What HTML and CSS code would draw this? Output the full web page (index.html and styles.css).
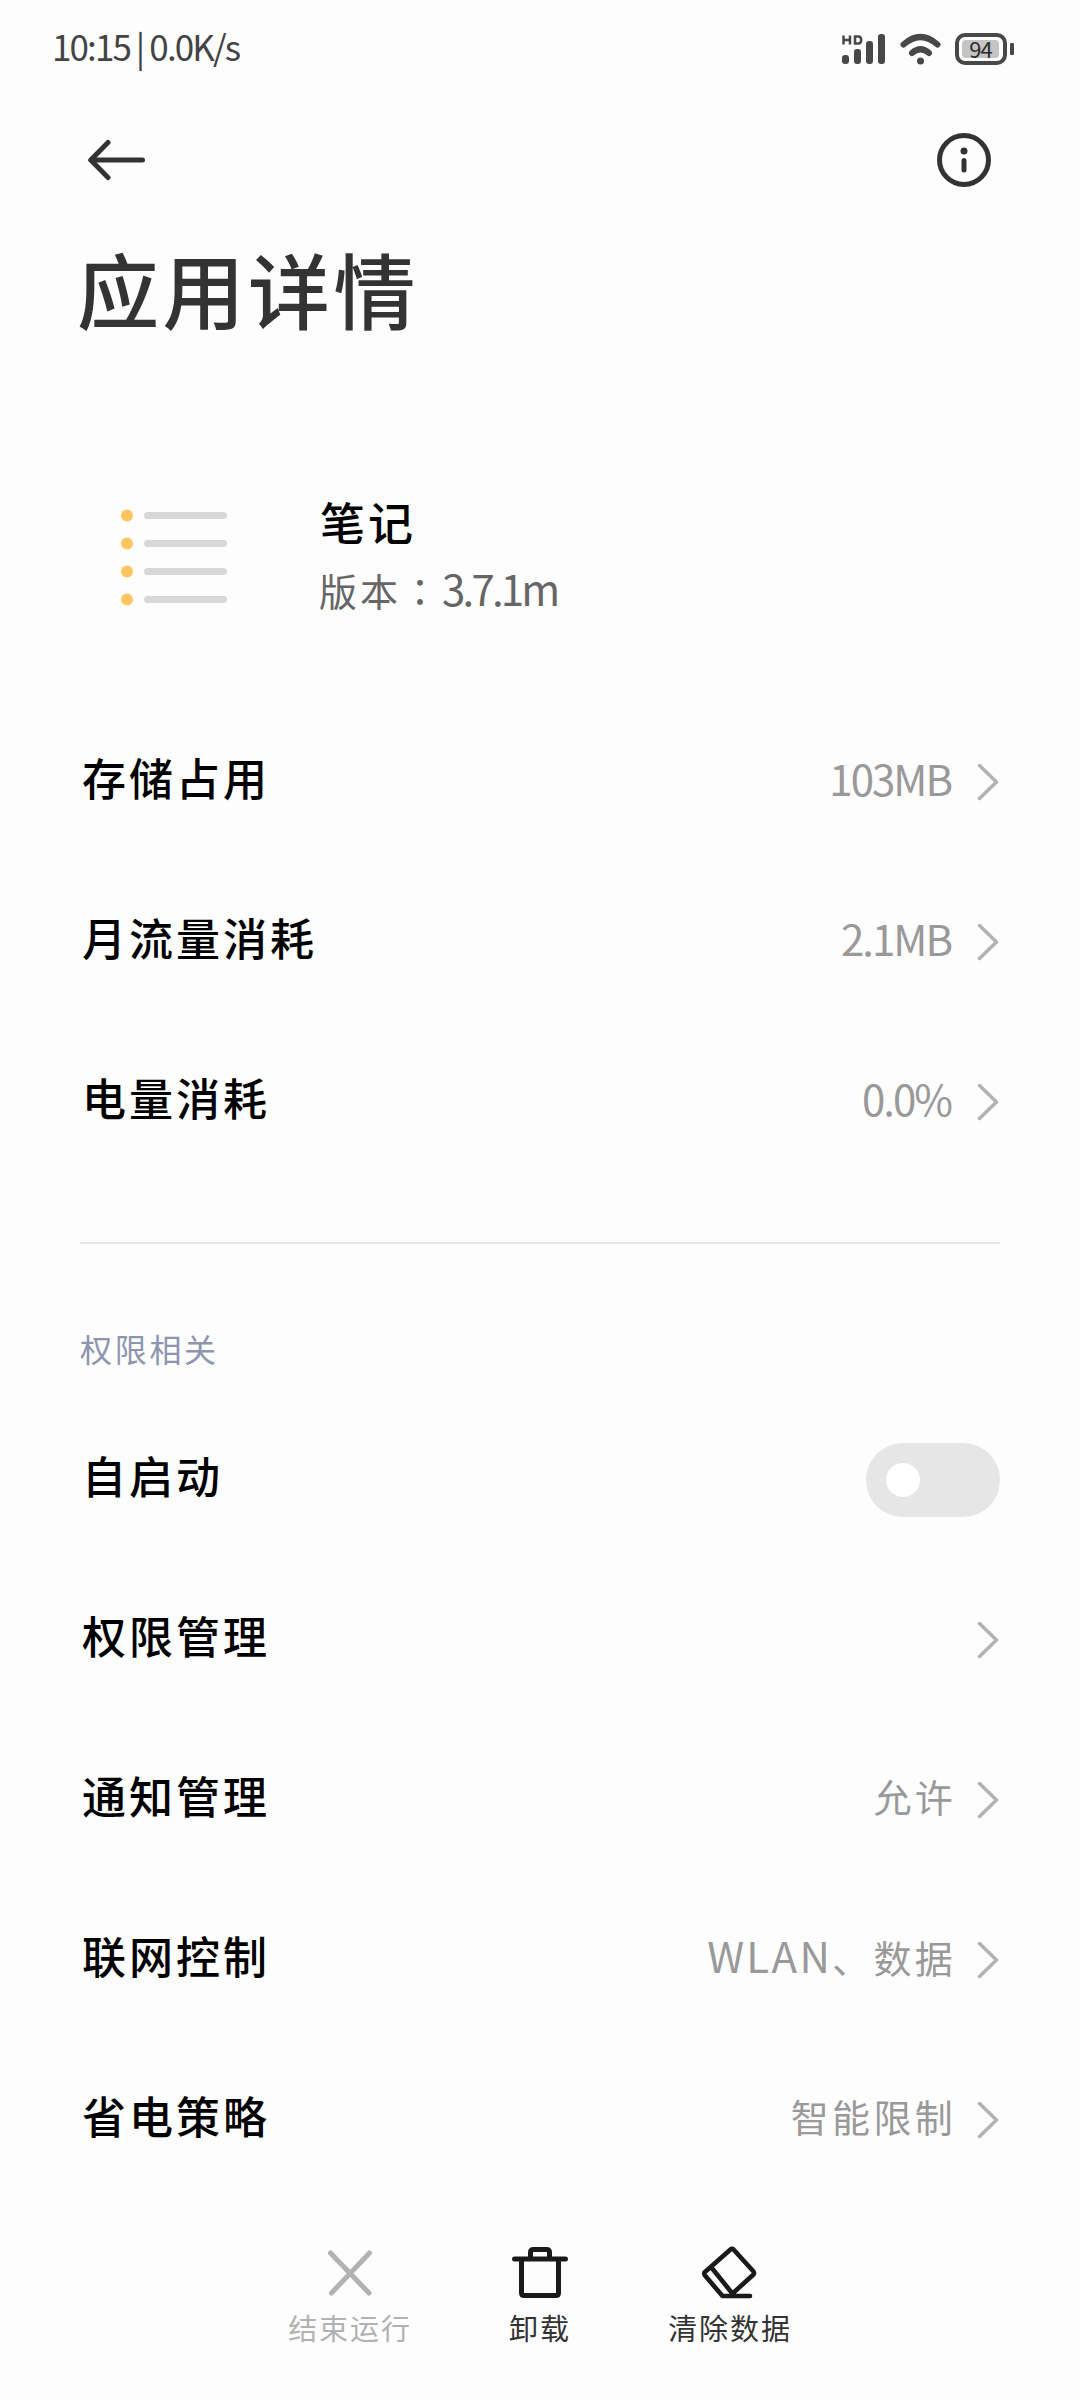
FILE: index.html
```html
<!DOCTYPE html>
<html lang="zh-CN">
<head>
<meta charset="utf-8">
<title>应用详情</title>
<link rel="stylesheet" href="styles.css">
</head>
<body>
<svg class="defs" width="0" height="0" aria-hidden="true">
  <symbol id="chevron" viewBox="0 0 24 40"><path d="M3.500 3.500L20.500 20L3.500 36.500" fill="none" stroke="#b2b2b2" stroke-width="3.500" stroke-linecap="round" stroke-linejoin="round"/></symbol>
</svg>
<div class="screen">
  <div class="status">
    <span class="status-text">10:15 | 0.0K/s</span>
    <div class="status-icons">
      <svg width="44" height="32" viewBox="0 0 44 32" fill="#484848">
        <path d="M1.500 2.500v9M8 2.500v9M1.500 7H8M13 3.500v7h3.200q3 0 3-3.500t-3-3.500z" fill="none" stroke="#484848" stroke-width="2.500"/>
        <rect x="0" y="22" width="7" height="9" rx="3"/>
        <rect x="12" y="16" width="7" height="15" rx="3"/>
        <rect x="24" y="8" width="7" height="23" rx="3"/>
        <rect x="36" y="1" width="7" height="30" rx="3"/>
      </svg>
      <svg width="42" height="32" viewBox="0 0 42 32" fill="none" stroke="#484848" stroke-width="6" stroke-linecap="round">
        <path d="M3.500 11.500Q20.500 -3.500 37.500 11.500M12 20Q20.500 12.500 29 20"/>
        <circle cx="20.500" cy="28" r="3.500" fill="#484848" stroke="none"/>
      </svg>
      <div class="battery"><span class="battery-level">94</span></div>
    </div>
  </div>
  <div class="toolbar">
    <svg width="60" height="44" viewBox="0 0 60 44" fill="none" stroke="#333" stroke-width="5" stroke-linecap="round" stroke-linejoin="round"><path d="M54.500 22H3M20 4.500L2.700 22L20 39.500"/></svg>
    <svg width="54" height="54" viewBox="0 0 54 54" fill="none" stroke="#333" stroke-width="5"><circle cx="27" cy="27" r="24.500"/><circle cx="27" cy="18" r="3.500" fill="#333" stroke="none"/><path d="M27 27.500v9.500" stroke-linecap="round"/></svg>
  </div>
  <h1 class="title">应用详情</h1>
  <div class="app">
    <svg width="120" height="100" viewBox="0 0 120 100">
      <g fill="#fec561"><circle cx="16" cy="6.500" r="6"/><circle cx="16" cy="34.500" r="6"/><circle cx="16" cy="62.500" r="6"/><circle cx="16" cy="90.500" r="6"/></g>
      <g fill="#d7d7d7"><rect x="33" y="3" width="83" height="7" rx="3.500"/><rect x="33" y="31" width="83" height="7" rx="3.500"/><rect x="33" y="59" width="83" height="7" rx="3.500"/><rect x="33" y="87" width="83" height="7" rx="3.500"/></g>
    </svg>
    <div class="app-info">
      <div class="app-name">笔记</div>
      <div class="app-version">版本<span class="colon" lang="zh-TW">：</span><span class="version">3.7.1m</span></div>
    </div>
  </div>
  <div class="list">
    <div class="row"><span class="label">存储占用</span><span class="value latin">103MB</span><svg class="chev"><use href="#chevron"/></svg></div>
    <div class="row"><span class="label">月流量消耗</span><span class="value latin">2.1MB</span><svg class="chev"><use href="#chevron"/></svg></div>
    <div class="row"><span class="label">电量消耗</span><span class="value latin">0.0%</span><svg class="chev"><use href="#chevron"/></svg></div>
  </div>
  <div class="divider"></div>
  <div class="section">权限相关</div>
  <div class="list">
    <div class="row"><span class="label">自启动</span><span class="toggle"></span></div>
    <div class="row"><span class="label">权限管理</span><svg class="chev"><use href="#chevron"/></svg></div>
    <div class="row"><span class="label">通知管理</span><span class="value">允许</span><svg class="chev"><use href="#chevron"/></svg></div>
    <div class="row"><span class="label">联网控制</span><span class="value"><span class="wlan">WLAN</span>、数据</span><svg class="chev"><use href="#chevron"/></svg></div>
    <div class="row"><span class="label">省电策略</span><span class="value">智能限制</span><svg class="chev"><use href="#chevron"/></svg></div>
  </div>
  <div class="actions">
    <div class="action disabled">
      <svg width="60" height="60" viewBox="0 0 60 60" fill="none" stroke="#b2b2b2" stroke-width="5" stroke-linecap="round"><path d="M10.500 10L49 50M49.500 10L11.500 50"/></svg>
      <span>结束运行</span>
    </div>
    <div class="action">
      <svg width="60" height="60" viewBox="0 0 60 60" fill="none" stroke="#1a1a1a" stroke-width="5" stroke-linecap="round" stroke-linejoin="round"><path d="M4.500 16H55.500M11.500 16V50Q11.500 52.500 14 52.500H46Q48.500 52.500 48.500 50V16M20.500 15V9.500Q20.500 6.500 23.500 6.500H36.500Q39.500 6.500 39.500 9.500V15"/></svg>
      <span>卸载</span>
    </div>
    <div class="action">
      <svg width="60" height="60" viewBox="0 0 60 60" fill="none" stroke="#1a1a1a" stroke-width="4.600" stroke-linecap="round" stroke-linejoin="round"><path d="M50 53H22.500L5 32.500Q3.500 30.500 5 29L30.500 6.500Q32 5 33.500 6.500L53.500 28.500Q54.500 30 53.500 31.500L32 51M11 24L32 50"/></svg>
      <span>清除数据</span>
    </div>
  </div>
</div>
</body>
</html>
```
FILE: styles.css
```css
body {
  margin: 0;
  background: #fdfdfd;
  font-family: "Noto Sans CJK SC", sans-serif;
  color: #000;
}
.defs { display: block; }
.screen {
  display: flex;
  flex-direction: column;
  width: 1080px;
  height: 2400px;
  box-sizing: border-box;
  overflow: hidden;
  white-space: nowrap;
}
.status {
  display: flex;
  justify-content: space-between;
  align-items: center;
  height: 98px;
  padding: 0 66px 0 52px;
}
.status-text {
  font-size: 35px;
  line-height: 50px;
  letter-spacing: -1.9px;
  padding-bottom: 7px;
  color: #444;
}
.status-icons { display: flex; align-items: center; gap: 14px; }
.battery {
  position: relative;
  display: flex;
  box-sizing: border-box;
  width: 52px;
  height: 32px;
  padding: 3px;
  margin-right: 7px;
  margin-left: -1px;
  border: 4px solid #484848;
  border-radius: 10px;
}
.battery::after {
  content: "";
  position: absolute;
  right: -11px;
  top: 6px;
  width: 4px;
  height: 12px;
  border-radius: 1px;
  background: #484848;
}
.battery-level {
  width: 37px;
  border-radius: 4px;
  background: #c4c4c4;
  font-size: 22px;
  line-height: 16px;
  letter-spacing: -1px;
  text-align: center;
  color: #2b2b2b;
}
.toolbar {
  display: flex;
  justify-content: space-between;
  align-items: center;
  height: 124px;
  padding: 0 89px 0 88px;
}
.title {
  margin: 6px 0 0 77px;
  font-size: 82px;
  line-height: 120px;
  letter-spacing: 3.500px;
  font-weight: 500;
  color: #333;
}
.app {
  display: flex;
  align-items: flex-start;
  height: 206px;
  margin-top: 148px;
  padding-left: 111px;
}
.app > svg { margin-top: 13px; }
.app-info { margin-left: 88px; }
.app-name {
  font-size: 45px;
  line-height: 66px;
  letter-spacing: 3px;
  font-weight: 500;
  margin-top: -7px;
  margin-left: 1px;
}
.app-version {
  font-size: 38px;
  line-height: 64px;
  letter-spacing: 3px;
  margin-top: 1px;
  color: #666;
}
.colon { font-family: "Noto Sans CJK TC", sans-serif; }
.version { font-size: 42px; letter-spacing: -2.8px; }
.list { display: flex; flex-direction: column; }
.row {
  display: flex;
  align-items: center;
  height: 160px;
  padding: 0 80px;
}
.label {
  flex: 1;
  padding: 0 0 10px 2px;
  font-size: 44px;
  line-height: 64px;
  letter-spacing: 3px;
  font-weight: 500;
}
.value {
  padding-bottom: 9px;
  font-size: 38px;
  line-height: 60px;
  letter-spacing: 3.300px;
  color: #999;
}
.latin { font-size: 42px; letter-spacing: -2px; padding-right: 5px; }
.wlan { font-size: 42px; letter-spacing: 2.300px; }
.chev { width: 24px; height: 40px; margin-left: 20px; }
.divider { height: 2px; margin: 60px 80px 0; background: #e5e5e5; }
.section {
  height: 156px;
  box-sizing: border-box;
  padding: 80px 80px 0;
  font-size: 32px;
  line-height: 48px;
  letter-spacing: 2.700px;
  color: #8d95b1;
}
.toggle {
  display: flex;
  align-items: center;
  box-sizing: border-box;
  width: 134px;
  height: 74px;
  padding-left: 20px;
  border-radius: 37px;
  background: #e6e6e6;
}
.toggle::before {
  content: "";
  width: 34px;
  height: 34px;
  border-radius: 50%;
  background: #fff;
}
.actions { display: flex; justify-content: center; margin-top: 43px; }
.action {
  display: flex;
  flex-direction: column;
  align-items: center;
  width: 190px;
  font-size: 29px;
  line-height: 42px;
  letter-spacing: 1.900px;
  color: #333;
}
.action span { margin-top: 3px; }
.disabled { color: #b2b2b2; }
```
